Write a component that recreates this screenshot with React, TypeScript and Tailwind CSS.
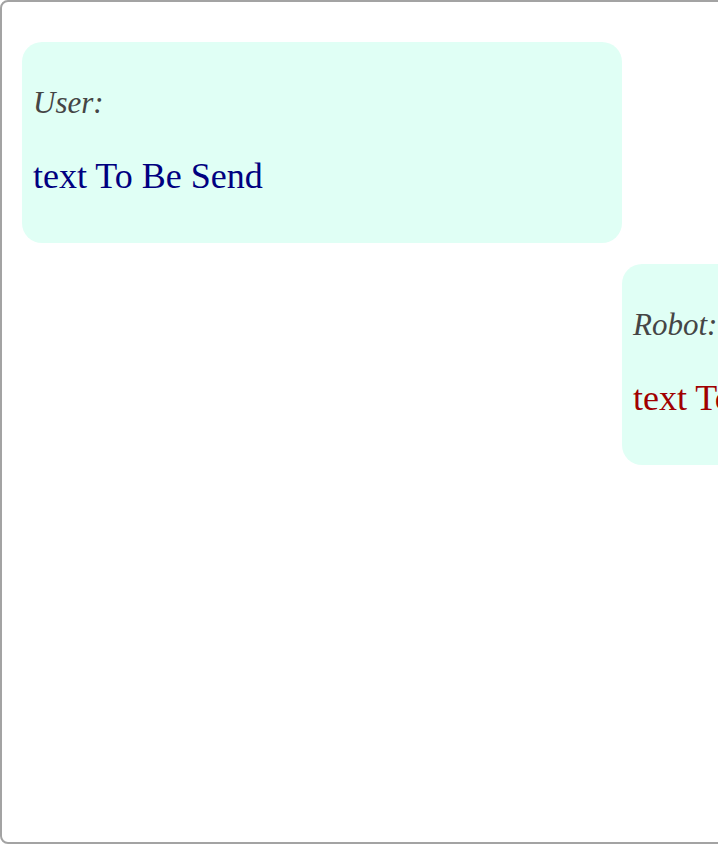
export default function App() {
  const bubbles = [
    { who: "User:", text: "text To Be Send", side: "self-start", color: "text-[#000080]" },
    { who: "Robot:", text: "text To Be Send", side: "self-end", color: "text-[#a00000]" },
  ];

  return (
    <div className="w-[718px] h-[844px] overflow-hidden bg-white" style={{ fontFamily: '"Liberation Serif", "Times New Roman", serif' }}>
      <div className="w-[1244px] h-[844px] border-2 border-[#a3a3a3] rounded-lg px-5 pt-10 flex flex-col gap-[21px]">
        {bubbles.map((b, i) => (
          <div key={i} className={`${b.side} w-[600px] h-[201px] bg-[#e0fff5] rounded-[20px] px-[11px] pt-[44px]`}>
            <p className="text-[31px] leading-[34px] italic text-[#454545]">{b.who}</p>
            <p className={`mt-[36px] text-[36px] leading-[41px] ${b.color}`}>{b.text}</p>
          </div>
        ))}
      </div>
    </div>
  );
}
